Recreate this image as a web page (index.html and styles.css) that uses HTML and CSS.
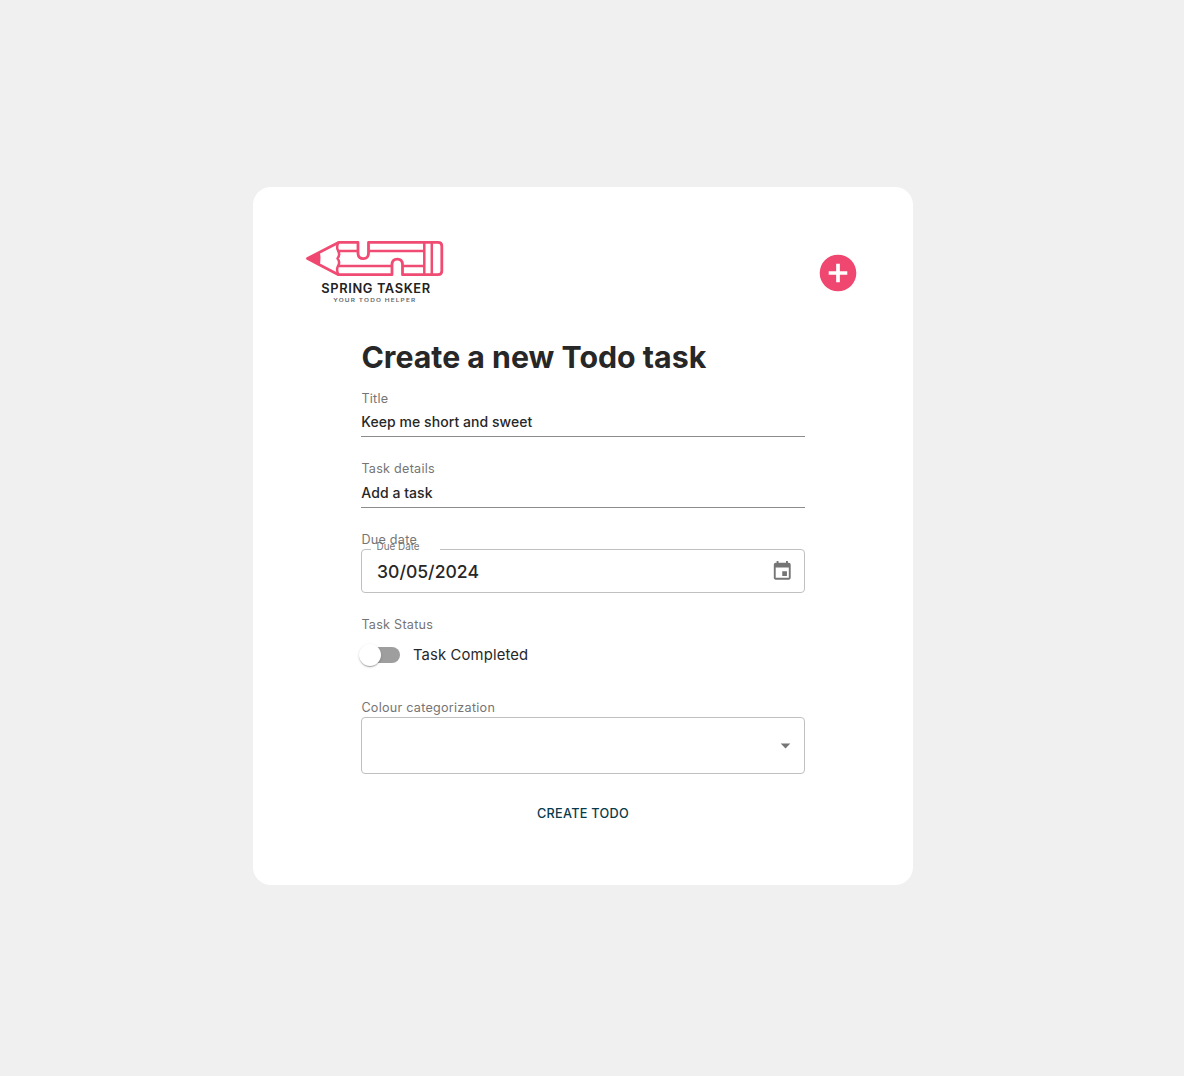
FILE: index.html
```html
<!DOCTYPE html>
<html lang="en">
<head>
<meta charset="utf-8">
<title>Spring Tasker</title>
<link rel="stylesheet" href="styles.css">
</head>
<body>
<main class="card">
  <header class="header">
    <svg class="logo" viewBox="0 0 160 80" role="img" aria-label="Spring Tasker">
      <g fill="none" stroke="#f04c73" stroke-width="2.8" stroke-linejoin="round">
        <path d="M12.500 28.500 43.500 12.400H63V22.700Q63 28.700 68.300 28.700T73.500 22.700V12.400H143Q146.800 12.400 146.800 16V41Q146.800 44.700 143 44.700H107.500V34.700Q107.500 29.200 102.300 29.200T97 34.700V44.700H43.500Z"/>
        <path stroke-width="2.500" d="M43.500 12.400Q41 16.500 43 20.500Q45.500 24.500 42.500 28.500Q45.500 32 43 36Q41 40 43.500 44.700M43.500 21H63M73.500 21H129M43.500 36H97M107.500 36H129M129.300 12.400V44.700M136.800 12.400V44.700"/>
      </g>
      <path fill="#ef476f" d="M11.500 28.500 24.500 21.500Q26.500 28.500 24.500 35.700Z"/>
      <text class="logo-name" x="26.300" y="63" textLength="109.500" lengthAdjust="spacingAndGlyphs">SPRING TASKER</text>
      <text class="logo-tag" x="38.300" y="71.800" textLength="83" lengthAdjust="spacingAndGlyphs">YOUR TODO HELPER</text>
    </svg>
    <svg class="add" viewBox="0 0 44 44" role="img" aria-label="Add">
      <circle cx="22" cy="22" r="18.300" fill="#ef476f"/>
      <path d="M22 12.700V31.300M12.700 22H31.300" stroke="#fff" stroke-width="3.700"/>
    </svg>
  </header>
  <form class="form">
    <h1 class="heading">Create a new Todo task</h1>
    <div class="field field-title">
      <label class="label">Title</label>
      <div class="line-input">Keep me short and sweet</div>
    </div>
    <div class="field field-details">
      <label class="label">Task details</label>
      <div class="line-input">Add a task</div>
    </div>
    <div class="field field-date">
      <label class="label">Due date</label>
      <div class="outlined date">
        <span class="notch"></span>
        <span class="floating">Due Date</span>
        <span class="date-value">30/05/2024</span>
        <svg class="calendar" viewBox="0 0 24 24"><path d="M17 12h-5v5h5v-5zM16 1v2H8V1H6v2H5c-1.110 0-1.990.9-1.990 2L3 19c0 1.100.89 2 2 2h14c1.100 0 2-.9 2-2V5c0-1.100-.9-2-2-2h-1V1h-2zm3 18H5V8h14v11z"/></svg>
      </div>
    </div>
    <div class="field field-status">
      <label class="label">Task Status</label>
      <div class="toggle-row">
        <span class="switch"><span class="thumb"></span></span>
        <span class="toggle-text">Task Completed</span>
      </div>
    </div>
    <div class="field">
      <label class="label">Colour categorization</label>
      <div class="outlined select">
        <svg class="arrow" viewBox="0 0 24 24"><path d="M7 10l5 5 5-5z"/></svg>
      </div>
    </div>
    <button class="submit" type="button">CREATE TODO</button>
  </form>
</main>
</body>
</html>
```
FILE: styles.css
```css
* { box-sizing: border-box; }
body {
  margin: 0;
  height: 1076px;
  padding-top: 187px;
  background: #f0f0f0;
  font-family: Inter, sans-serif;
  color: #272727;
}
.card {
  width: 660px;
  height: 698px;
  margin-left: 253px;
  border-radius: 18px;
  background: #fff;
  padding: 43px 53px 0 42px;
}
.header {
  display: flex;
  justify-content: space-between;
  align-items: flex-start;
  height: 108px;
}
.logo { width: 160px; height: 80px; }
.logo-name { font-size: 12.600px; font-weight: 600; letter-spacing: .6px; fill: #222; }
.logo-tag { font-size: 4.400px; font-weight: 600; letter-spacing: .8px; fill: #666; }
.add { width: 44px; height: 44px; margin-top: 21px; }
.form {
  width: 444px;
  margin-left: 66px;
  display: flex;
  flex-direction: column;
}
.heading {
  margin: 0 0 13px;
  padding-left: .4px;
  font-size: 30.300px;
  line-height: 38px;
  font-weight: 700;
  white-space: nowrap;
}
.label {
  display: block;
  height: 18px;
  padding-left: .4px;
  font-size: 12.600px;
  line-height: 18px;
  letter-spacing: .26px;
  color: #757575;
}
.field-title { height: 71px; }
.field-title .label { line-height: 20px; }
.field-details { height: 71px; }
.line-input {
  height: 30px;
  padding-left: .3px;
  border-bottom: 1px solid #8c8c8c;
  font-size: 14px;
  line-height: 30px;
  letter-spacing: .06px;
  font-weight: 500;
}
.field-date { height: 85px; }
.outlined {
  position: relative;
  display: flex;
  align-items: center;
  border: 1px solid #c0c0c0;
  border-radius: 4px;
}
.date { height: 44px; padding: 0 10px 0 15px; justify-content: space-between; }
.notch { position: absolute; left: 9px; top: -1px; width: 69px; height: 1px; background: #fff; }
.floating {
  position: absolute;
  left: 14.500px;
  top: -11px;
  font-size: 9.900px;
  line-height: 14px;
  color: #757575;
}
.date-value { font-size: 17.600px; font-weight: 500; }
.calendar { width: 22.500px; height: 22.500px; margin-right: .7px; fill: #757575; }
.field-status { height: 83px; }
.toggle-row { display: flex; align-items: center; height: 42px; }
.switch { position: relative; width: 34px; height: 16px; margin-left: 5px; border-radius: 8px; background: #9e9e9e; }
.thumb {
  position: absolute;
  left: -7px;
  top: -3px;
  width: 22px;
  height: 22px;
  border-radius: 50%;
  background: #fff;
  box-shadow: 0 2px 1px -1px #0003, 0 1px 1px #0002, 0 1px 3px #0002;
}
.toggle-text { margin-left: 13px; font-size: 14.800px; letter-spacing: .15px; }
.select { height: 57px; justify-content: flex-end; padding-right: 7px; }
.arrow { width: 23px; height: 23px; margin-bottom: 1px; fill: #757575; }
.submit {
  align-self: center;
  margin-top: 28px;
  height: 24px;
  padding: 0;
  border: 0;
  background: none;
  font: 500 12.700px/24px Inter, sans-serif;
  letter-spacing: .28px;
  color: #073b4c;
}
```
